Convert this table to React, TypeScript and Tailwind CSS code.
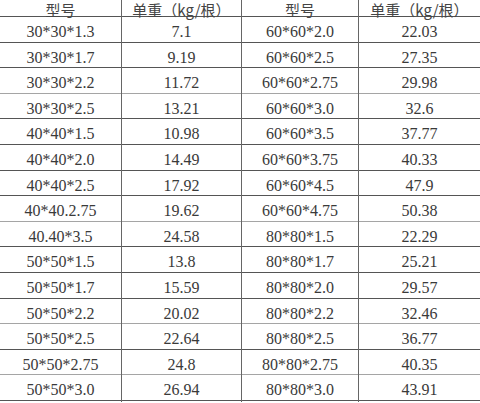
const rows: [string, string, string, string][] = [
  ['30*30*1.3', '7.1', '60*60*2.0', '22.03'],
  ['30*30*1.7', '9.19', '60*60*2.5', '27.35'],
  ['30*30*2.2', '11.72', '60*60*2.75', '29.98'],
  ['30*30*2.5', '13.21', '60*60*3.0', '32.6'],
  ['40*40*1.5', '10.98', '60*60*3.5', '37.77'],
  ['40*40*2.0', '14.49', '60*60*3.75', '40.33'],
  ['40*40*2.5', '17.92', '60*60*4.5', '47.9'],
  ['40*40.2.75', '19.62', '60*60*4.75', '50.38'],
  ['40.40*3.5', '24.58', '80*80*1.5', '22.29'],
  ['50*50*1.5', '13.8', '80*80*1.7', '25.21'],
  ['50*50*1.7', '15.59', '80*80*2.0', '29.57'],
  ['50*50*2.2', '20.02', '80*80*2.2', '32.46'],
  ['50*50*2.5', '22.64', '80*80*2.5', '36.77'],
  ['50*50*2.75', '24.8', '80*80*2.75', '40.35'],
  ['50*50*3.0', '26.94', '80*80*3.0', '43.91'],
]

// rows whose bottom rule came out lighter in the scan
const lightRules = new Set([2, 7, 11, 13])

const cols = 'grid grid-cols-[122px_120px_117px_121px]'
const cell = 'flex items-center justify-center border-r border-[#666] last:border-r-0'

export default function App() {
  return (
    <div className="w-[480px] h-[403px] overflow-hidden bg-white">
      <div className="-mt-[9px] w-[480px] text-[#3a3a3a]">
        {/* header */}
        <div className={`${cols} h-[26px] border-b border-[#555] font-['Noto_Sans_CJK_SC',sans-serif] text-[15px] text-[#444]`}>
          <div className={`${cell} pt-[8px]`}>型号</div>
          <div className={`${cell} pt-[8px]`}>单重（kg/根）</div>
          <div className={`${cell} pt-[8px]`}>型号</div>
          <div className={`${cell} pt-[8px]`}>单重（kg/根）</div>
        </div>

        {rows.map((r, i) => (
          <div
            key={i}
            className={`${cols} h-[25.6px] border-b ${
              lightRules.has(i) ? 'border-[#a5a5a5]' : 'border-[#555]'
            } font-['Liberation_Serif',serif] text-[16px]`}
          >
            {r.map((v, j) => (
              <div key={j} className={`${cell} pt-[3px]`}>
                {v}
              </div>
            ))}
          </div>
        ))}
      </div>
    </div>
  )
}
